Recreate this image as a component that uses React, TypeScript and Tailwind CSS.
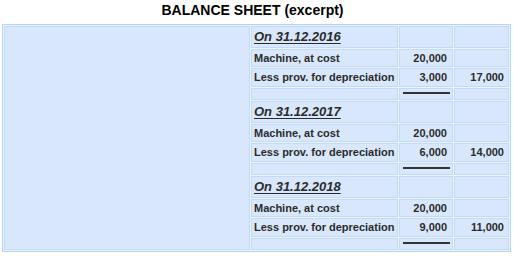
const sections = [
  { date: "On 31.12.2016", cost: "20,000", dep: "3,000", net: "17,000" },
  { date: "On 31.12.2017", cost: "20,000", dep: "6,000", net: "14,000" },
  { date: "On 31.12.2018", cost: "20,000", dep: "9,000", net: "11,000" },
];

const cell = "bg-[#d8e7fc] border border-[#c2daf7] flex items-center min-w-0";

export default function App() {
  return (
    <div className="w-[513px] h-[256px] bg-white font-['Liberation_Sans',Arial,sans-serif] text-[#2b2b2b]">
      <div className="h-[24px] pt-[1px] text-center text-[14px] font-bold text-black pr-[8px] leading-[18px]">
        BALANCE SHEET (excerpt)
      </div>
      <div className="ml-[2px] w-[509px] h-[228px] border border-[#b7d4f5] bg-[#eaf3fe] p-px grid grid-cols-[246px_147px_54px_55px] grid-rows-[repeat(12,1fr)] gap-px">
        <div className={`${cell} row-span-12`} />
        {sections.map((s) => (
          <Section key={s.date} {...s} />
        ))}
      </div>
    </div>
  );
}

function Section({ date, cost, dep, net }: { date: string; cost: string; dep: string; net: string }) {
  return (
    <>
      <div className={`${cell} pl-[2px] text-[13px] font-bold italic underline underline-offset-2`}>{date}</div>
      <div className={cell} />
      <div className={cell} />

      <div className={`${cell} pl-[2px] text-[11px] font-bold`}>Machine, at cost</div>
      <div className={`${cell} justify-end pr-[5px] text-[11px] font-bold`}>{cost}</div>
      <div className={cell} />

      <div className={`${cell} pl-[2px] text-[11px] font-bold whitespace-nowrap`}>Less prov. for depreciation</div>
      <div className={`${cell} justify-end pr-[5px] text-[11px] font-bold`}>{dep}</div>
      <div className={`${cell} justify-end pr-[4px] text-[11px] font-bold`}>{net}</div>

      <div className={cell} />
      <div className={`${cell} justify-center pb-[2px]`}>
        <div className="h-[2px] w-[47px] bg-[#333]" />
      </div>
      <div className={cell} />
    </>
  );
}
